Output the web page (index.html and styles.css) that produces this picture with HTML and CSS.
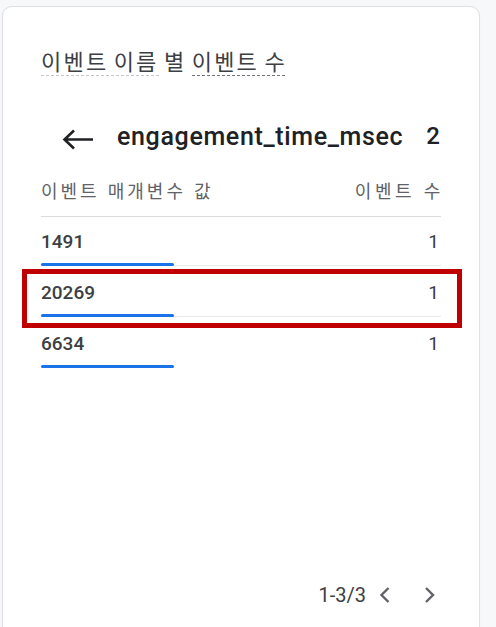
FILE: index.html
```html
<!DOCTYPE html>
<html lang="ko">
<head>
<meta charset="utf-8">
<link rel="stylesheet" href="styles.css">
</head>
<body>
<div class="card">
  <div class="title">
    <span class="dim-link light">이벤트 이름</span> 별 <span class="dim-link dark">이벤트 수</span>
  </div>

  <div class="drill">
    <svg class="back" width="36" height="24" viewBox="0 0 36 24">
      <path d="M4.5 11.5 H33 M14 2.5 L4.5 11.5 L14 20.5" fill="none" stroke="#202124" stroke-width="2.6" stroke-linecap="butt" stroke-linejoin="miter"/>
    </svg>
    <span class="drill-name">engagement_time_msec</span>
    <span class="drill-count">2</span>
  </div>

  <div class="thead">
    <span>이벤트 매개변수 값</span>
    <span class="thead-right">이벤트 수</span>
  </div>

  <div class="rows">
    <div class="row">
      <div class="row-line"><span class="val">1491</span><span class="num">1</span></div>
      <div class="track"><div class="fill" style="width:133px"></div></div>
    </div>
    <div class="row highlighted">
      <div class="row-line"><span class="val">20269</span><span class="num">1</span></div>
      <div class="track"><div class="fill" style="width:133px"></div></div>
      <div class="mark"></div>
    </div>
    <div class="row last">
      <div class="row-line"><span class="val">6634</span><span class="num">1</span></div>
      <div class="track"><div class="fill" style="width:133px"></div></div>
    </div>
  </div>

  <div class="pager">
    <span class="range">1-3/3</span>
    <svg class="chev" width="24" height="24" viewBox="0 0 24 24">
      <path d="M16.5 5 L9.5 12 L16.5 19" fill="none" stroke="#5f6368" stroke-width="2.4"/>
    </svg>
    <svg class="chev next" width="24" height="24" viewBox="0 0 24 24">
      <path d="M8 5 L15 12 L8 19" fill="none" stroke="#5f6368" stroke-width="2.4"/>
    </svg>
  </div>
</div>
</body>
</html>
```

FILE: styles.css
```css
html, body {
  margin: 0;
  padding: 0;
  background: #f7f8fa;
}
body {
  padding: 6px 0 0 2px;
  font-family: Roboto, "Noto Sans CJK KR", sans-serif;
  overflow: hidden;
}
.card {
  box-sizing: border-box;
  width: 478px;
  height: 650px;
  background: #ffffff;
  border: 1px solid #dfe1e5;
  border-radius: 10px;
  box-shadow: 0 0 1px #e6e8eb;
  padding: 40px 38px 38px 38px;
  display: flex;
  flex-direction: column;
}
.title {
  font-family: "Noto Sans CJK KR", sans-serif;
  font-size: 22px;
  letter-spacing: 2.2px;
  word-spacing: -3px;
  line-height: 26px;
  color: #3c4043;
  height: 30px;
  white-space: nowrap;
}
.dim-link {
  display: inline-block;
  padding-bottom: 3px;
  background-repeat: repeat-x;
  background-position: left bottom;
  background-size: 5px 1px;
}
.dim-link.light {
  background-image: linear-gradient(to right, #c4c7cc 0 3px, transparent 3px 5px);
}
.dim-link.dark {
  background-image: linear-gradient(to right, #6f737a 0 3px, transparent 3px 5px);
}
.drill {
  margin-top: 45px;
  height: 30px;
  display: flex;
  align-items: center;
  color: #202124;
}
.back {
  margin-left: 19px;
  margin-top: 6px;
  flex: none;
}
.drill-name {
  margin-left: 21px;
  font-size: 25px;
  font-weight: 500;
  letter-spacing: 0.65px;
  margin-top: -2px;
}
.drill-count {
  margin-left: auto;
  font-size: 24px;
  font-weight: 500;
  padding-right: 1px;
  margin-top: -2px;
}
.thead {
  display: flex;
  justify-content: space-between;
  padding: 26px 0 14px;
  border-bottom: 1px solid #dadce0;
  font-family: "Noto Sans CJK KR", sans-serif;
  font-size: 18px;
  line-height: 24px;
  letter-spacing: 3px;
  color: #5f6368;
}
.thead-right {
  margin-right: -3px;
  letter-spacing: 3.6px;
}
.row {
  position: relative;
  padding: 14px 0 2px;
}
.row-line {
  display: flex;
  justify-content: space-between;
  line-height: 22px;
  font-size: 19px;
  color: #3c4043;
}
.val {
  font-weight: 500;
}
.num {
  padding-right: 2px;
}
.track {
  margin-top: 10px;
  height: 3px;
  background: linear-gradient(to bottom, transparent 0 2px, #e8eaed 2px 3px);
}
.row.last .track {
  background: none;
}
.fill {
  height: 3px;
  background: #1a73e8;
  border-radius: 2px;
}
.mark {
  position: absolute;
  left: -19px;
  top: 1px;
  width: 440px;
  height: 59px;
  box-sizing: border-box;
  border: 5px solid #c00000;
}
.pager {
  margin-top: auto;
  display: flex;
  align-items: center;
  justify-content: flex-end;
  margin-right: -1px;
  height: 24px;
  margin-bottom: 10px;
}
.range {
  font-size: 20px;
  color: #3c4043;
  margin-right: 6px;
}
.chev.next {
  margin-left: 22px;
}
```
